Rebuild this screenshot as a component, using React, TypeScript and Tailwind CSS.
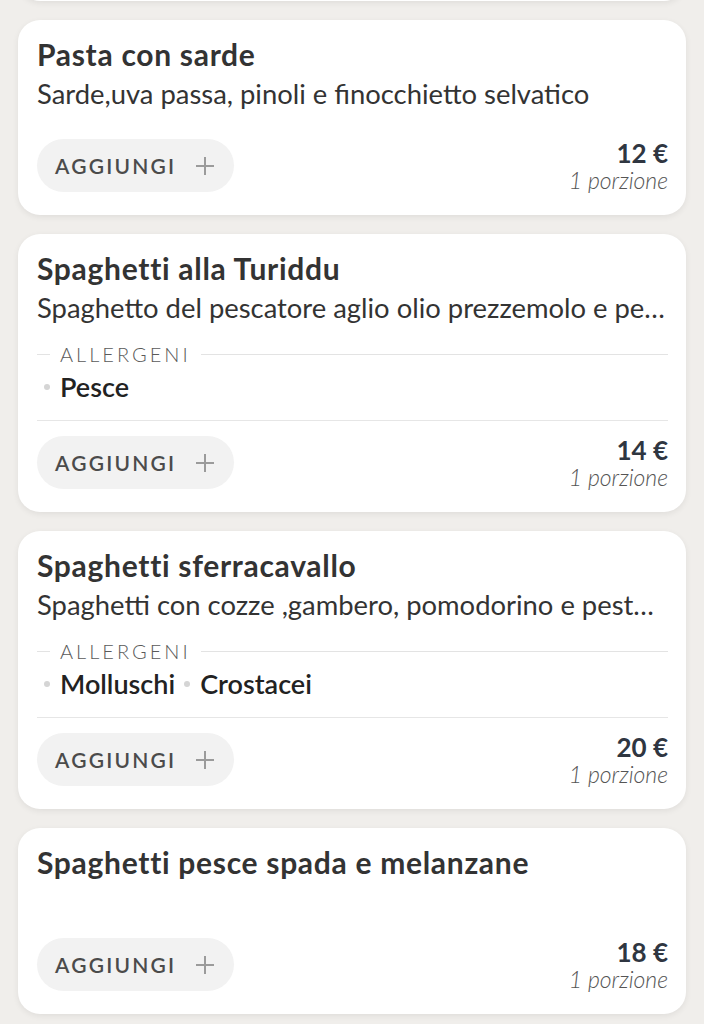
import React from 'react';

interface Dish {
    title: string;
    description: string;
    allergens: string[];
    price: string;
}

const dishes: Dish[] = [
    {
        title: "Pasta con sarde",
        description: "Sarde,uva passa, pinoli e finocchietto selvatico",
        allergens: [],
        price: "12 €",
    },
    {
        title: "Spaghetti alla Turiddu",
        description: "Spaghetto del pescatore aglio olio prezzemolo e peperoncino",
        allergens: ["Pesce"],
        price: "14 €",
    },
    {
        title: "Spaghetti sferracavallo",
        description: "Spaghetti con cozze ,gambero, pomodorino e pesto di pistacchio",
        allergens: ["Molluschi", "Crostacei"],
        price: "20 €",
    },
    {
        title: "Spaghetti pesce spada e melanzane",
        description: "",
        allergens: [],
        price: "18 €",
    },
];

const PlusIcon = () => (
    <svg width="20" height="20" viewBox="0 0 20 20" fill="none" stroke="#9b9b9b" strokeWidth="2">
        <path d="M10 1v18M1 10h18" />
    </svg>
);

const DishCard = ({ dish }: { dish: Dish }) => {
    const hasAllergens = dish.allergens.length > 0;
    return (
        <div className="bg-white rounded-[22px] shadow-[0_2px_6px_rgba(0,0,0,0.07)] pl-[19px] pr-[18px] pt-[17px] pb-[23px]">
            <h3 className="text-[30px] leading-[34px] font-bold tracking-[0.7px] text-[#333333]">{dish.title}</h3>
            {dish.description ? (
                <p className="mt-[7px] text-[27.4px] leading-[32px] text-[#333333] truncate">{dish.description}</p>
            ) : (
                <div className="mt-[7px] h-[23px]" />
            )}

            {hasAllergens && (
                <div>
                    <div className="mt-[17px] flex items-center h-[26px]">
                        <div className="w-[13px] h-px bg-[#e3e3e3]" />
                        <span className="mx-[10px] text-[20px] tracking-[3px] text-[#5a5a5a] font-light">ALLERGENI</span>
                        <div className="flex-1 h-px bg-[#e3e3e3]" />
                    </div>
                    <div className="mt-[4px] flex items-center h-[32px] gap-[2px]">
                        {dish.allergens.map((a) => (
                            <div key={a} className="flex items-center gap-[10px]">
                                <span className="ml-[7px] w-[6px] h-[6px] rounded-full bg-[#d5d5d5]" />
                                <span className="text-[27px] font-semibold text-[#222222]">{a}</span>
                            </div>
                        ))}
                    </div>
                    <div className="mt-[17px] h-px bg-[#e6e6e6]" />
                </div>
            )}

            <div className={`h-[53px] flex items-start justify-between ${hasAllergens ? "mt-[15px]" : "mt-[29px]"}`}>
                <button className="h-[53px] w-[197px] rounded-full bg-[#f2f2f2] flex items-center pl-[18px] gap-[19px]">
                    <span className="text-[21px] font-semibold tracking-[2.2px] text-[#4b4b4b]">AGGIUNGI</span>
                    <PlusIcon />
                </button>
                <div className="flex flex-col items-end mt-[1px]">
                    <span className="text-[26px] leading-[27px] font-bold text-[#2f3641]">{dish.price}</span>
                    <span className="text-[23px] leading-[27px] italic font-light text-[#555555]">1 porzione</span>
                </div>
            </div>
        </div>
    );
};

export default function App() {
    return (
        <div className="w-[704px] h-[1024px] overflow-hidden bg-[#f0eeeb]" style={{ fontFamily: "Lato, 'Open Sans', sans-serif" }}>
            <div className="pl-[18px] pr-[18px] flex flex-col gap-[19px]">
                <div className="-mt-[77px] h-[78px] bg-white rounded-[22px] shadow-[0_2px_6px_rgba(0,0,0,0.07)]" />
                {dishes.map((d) => (
                    <DishCard key={d.title} dish={d} />
                ))}
            </div>
        </div>
    );
}
